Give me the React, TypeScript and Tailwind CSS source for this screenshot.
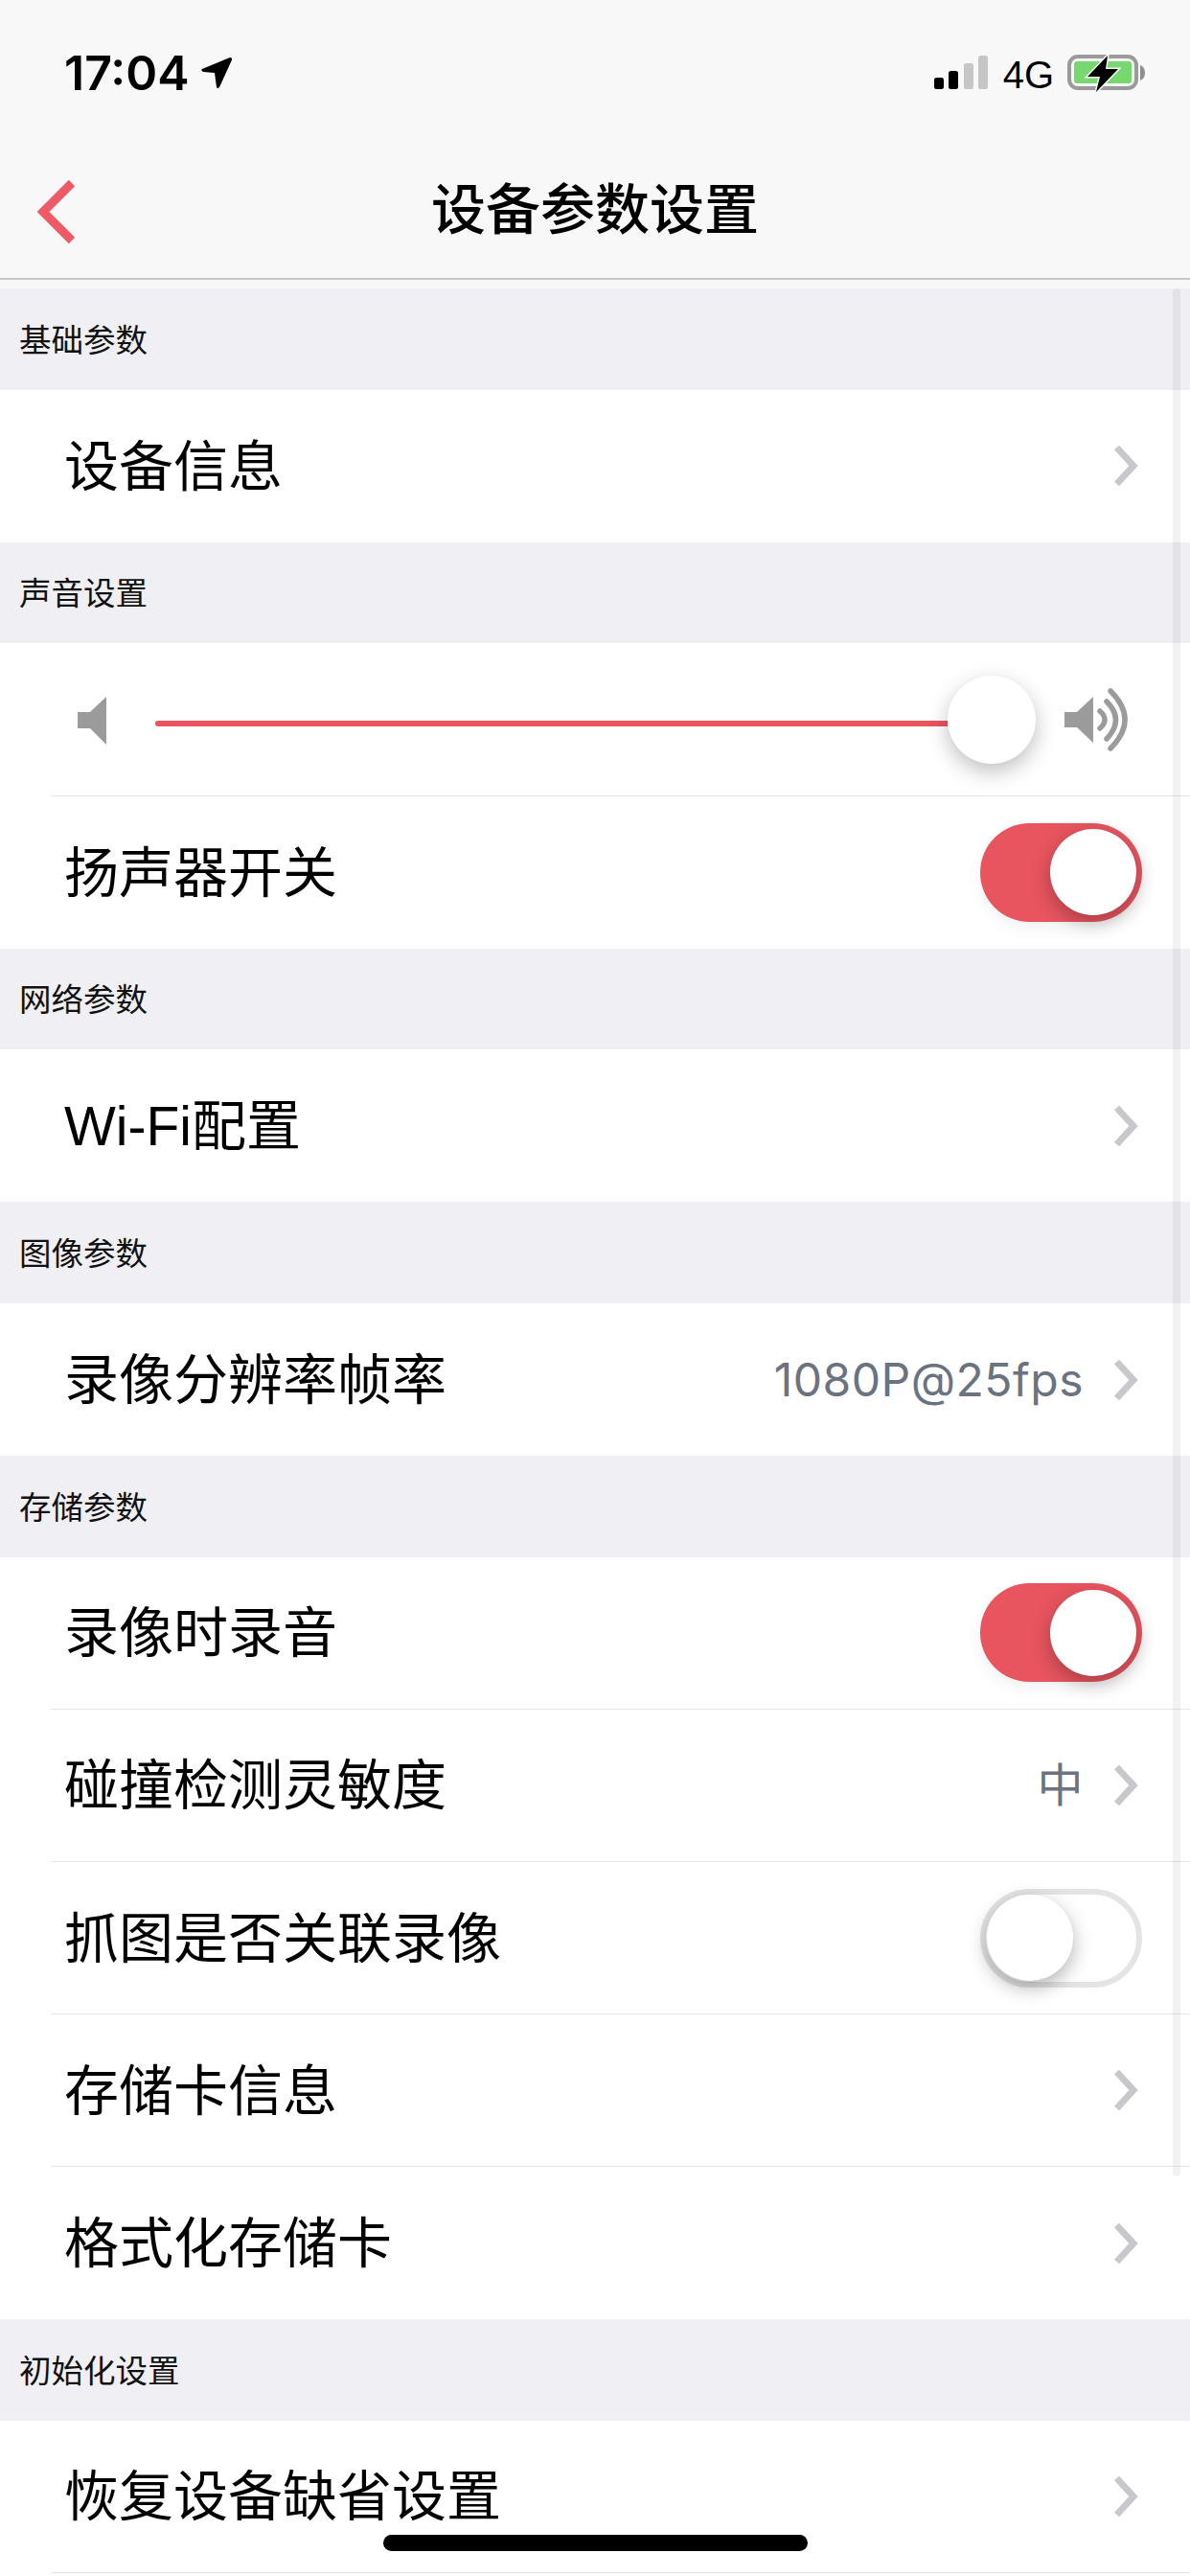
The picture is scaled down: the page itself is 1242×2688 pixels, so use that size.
import React from "react";

const CJK = "font-['Inter','Noto_Sans_CJK_SC',sans-serif]";

function Chevron() {
  return (
    <svg width="26" height="44" viewBox="0 0 26 44" className="shrink-0">
      <path d="M3.5 3 L21 22 L3.5 41" fill="none" stroke="#c7c7cc" strokeWidth="7" />
    </svg>
  );
}

function Toggle({ on }: { on: boolean }) {
  return on ? (
    <div className="flex h-[103px] w-[169px] shrink-0 items-center justify-end rounded-full bg-[#e8555f] pr-[6px] shadow-[0_6px_18px_rgba(0,0,0,0.06)]">
      <div className="h-[90px] w-[90px] rounded-full bg-white shadow-[0_7px_20px_rgba(0,0,0,0.28)]" />
    </div>
  ) : (
    <div className="flex h-[103px] w-[169px] shrink-0 items-center justify-start rounded-full border-[6px] border-[#e4e4e4] bg-white pl-[1px]">
      <div className="h-[90px] w-[90px] rounded-full bg-white shadow-[0_7px_20px_rgba(0,0,0,0.3)]" />
    </div>
  );
}

function Section({ title }: { title: string }) {
  return (
    <div className="flex h-[105.7px] items-center bg-[#efeff4] pl-[20px] pt-[2px] text-[33.5px] text-[#111]">
      {title}
    </div>
  );
}

function Row({
  label,
  value,
  toggle,
  last,
}: {
  label: string;
  value?: string;
  toggle?: boolean;
  last?: boolean;
}) {
  return (
    <div className="bg-white pl-[53px]">
      <div
        className={
          "flex h-[159.08px] items-center pl-[14px] " +
          (toggle === undefined ? "pr-[54px] " : "pr-[50px] ") +
          (last ? "" : "border-b border-[#e3e6ea]")
        }
      >
        <span className="flex-1 pt-[2px] font-['Liberation_Sans','Noto_Sans_CJK_SC',sans-serif] text-[57px] leading-none text-black">
          {label}
        </span>
        {value && (
          <span className="mr-[31px] text-[48px] leading-none tracking-[0.5px] text-[#6b7280]">
            {value}
          </span>
        )}
        {toggle === undefined ? <Chevron /> : <Toggle on={toggle} />}
      </div>
    </div>
  );
}

export default function App() {
  return (
    <div className={"relative h-[2688px] w-[1242px] overflow-hidden bg-white " + CJK}>
      <header className="h-[292px] border-b-2 border-[#c8c8c8] bg-[#f8f8f8]">
        <div className="flex h-[108px] items-end justify-between pl-[67px] pr-[46px]">
          <div className="flex items-center gap-[11px] pb-[12px]">
            <span className="text-[50px] font-semibold leading-[40px] text-black">17:04</span>
            <svg width="34" height="34" viewBox="0 0 34 34">
              <path d="M31 1 Q33.5 1 33 3.5 L20 32 Q18 34 17 32 L15 17 L3 16 Q0 14 2 13 Z" fill="#000" />
            </svg>
          </div>
          <div className="flex items-end pb-[14px]">
            <svg width="58" height="37" viewBox="0 0 58 37">
              <rect x="0" y="24" width="10" height="12" rx="2.5" fill="#000" />
              <rect x="15" y="17" width="10" height="19" rx="2.5" fill="#000" />
              <rect x="31" y="9" width="10" height="27" rx="2.5" fill="#c6c6c6" />
              <rect x="46" y="1" width="10" height="35" rx="2.5" fill="#c6c6c6" />
            </svg>
            <span className="ml-[14px] -mb-[1px] font-['Liberation_Sans',sans-serif] text-[40px] leading-[34px] text-black">
              4G
            </span>
            <svg width="82" height="42" viewBox="0 0 82 42" className="ml-[14px] -mb-[3px]">
              <rect x="2" y="4" width="70" height="33" rx="9" fill="none" stroke="#9a9a9a" strokeWidth="4" />
              <rect x="7" y="9" width="60" height="23" rx="3" fill="#78d870" />
              <path d="M76 13 Q81 15 81 21 Q81 27 76 29 Z" fill="#8f8f8f" />
              <path
                d="M42 3 L21 25 L34 25 L30 41 L53 17 L40 17 Z"
                fill="#000"
                stroke="#f8f8f8"
                strokeWidth="3"
                paintOrder="stroke"
              />
            </svg>
          </div>
        </div>
        <div className="relative flex h-[182px] items-center justify-center pt-[38px]">
          <svg
            width="50"
            height="72"
            viewBox="0 0 50 72"
            className="absolute left-[34px] top-[77px]"
          >
            <path d="M41 6 L11 36 L41 66" fill="none" stroke="#ee5a66" strokeWidth="9" />
          </svg>
          <h1 className="text-[57px] font-medium leading-none text-black">设备参数设置</h1>
        </div>
      </header>
      <div className="h-[9px] bg-[#f8f8f8]" />

      <Section title="基础参数" />
      <Row label="设备信息" last />

      <Section title="声音设置" />
      <div className="bg-white pl-[53px]">
        <div className="flex h-[159.08px] items-center border-b border-[#e3e6ea] pl-[28px] pr-[63px]">
          <svg width="30" height="50" viewBox="0 0 30 50" className="mt-[3px] shrink-0">
            <path d="M0 16 H13 L30 0 V50 L13 33 H0 Z" fill="#9b9b9b" />
          </svg>
          <div className="ml-[51px] flex flex-1 items-center">
            <div className="mt-[10px] h-[6px] flex-1 rounded-l-full bg-[#e8555f]" />
            <div className="mt-[1px] h-[92px] w-[92px] shrink-0 rounded-full bg-white shadow-[0_8px_22px_rgba(0,0,0,0.25)]" />
          </div>
          <svg width="68" height="66" viewBox="0 0 68 66" className="ml-[30px] mt-[1px] shrink-0">
            <path d="M0 25 H13 L30 9 V57 L13 41 H0 Z" fill="#9b9b9b" />
            <g fill="none" stroke="#9b9b9b" strokeWidth="5.5" strokeLinecap="round">
              <path d="M37 24 Q47 33 37 42" />
              <path d="M44 14 Q63 33 44 53" />
              <path d="M48 3 Q78 33 48 63" />
            </g>
          </svg>
        </div>
      </div>
      <Row label="扬声器开关" toggle={true} last />

      <Section title="网络参数" />
      <Row label="Wi-Fi配置" last />

      <Section title="图像参数" />
      <Row label="录像分辨率帧率" value="1080P@25fps" last />

      <Section title="存储参数" />
      <Row label="录像时录音" toggle={true} />
      <Row label="碰撞检测灵敏度" value="中" />
      <Row label="抓图是否关联录像" toggle={false} />
      <Row label="存储卡信息" />
      <Row label="格式化存储卡" last />

      <Section title="初始化设置" />
      <Row label="恢复设备缺省设置" />

      {/* scroll indicator and home indicator lie over the content */}
      <div className="absolute left-[1224px] top-[301px] h-[1970px] w-[8px] rounded-full bg-[rgba(0,0,0,0.05)]" />
      <div className="absolute left-[400px] top-[2645px] h-[17px] w-[443px] rounded-full bg-black" />
    </div>
  );
}
